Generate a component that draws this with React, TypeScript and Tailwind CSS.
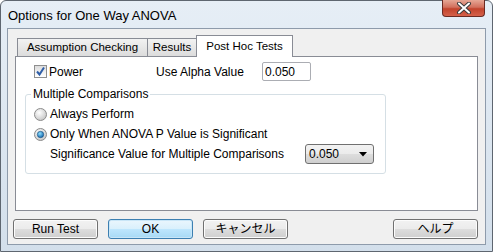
import { ReactNode } from "react";

const font = { fontFamily: '"Liberation Sans", "Noto Sans CJK JP", sans-serif' };

const Button = ({ children, primary }: { children: ReactNode; primary?: boolean }) => (
  <div
    className={
      "w-[85px] h-[20px] flex items-center justify-center rounded-[3px] border text-[12px] text-black " +
      (primary
        ? "border-[#3c7fb1] bg-[linear-gradient(#eaf6fd_0%,#d9f0fc_50%,#bee6fd_51%,#a7d9f5_100%)] shadow-[inset_0_0_0_1px_#c9e6f7]"
        : "border-[#707070] bg-[linear-gradient(#f2f2f2_0%,#ebebeb_50%,#dddddd_51%,#cfcfcf_100%)] shadow-[inset_0_0_0_1px_#fcfcfc]")
    }
  >
    {children}
  </div>
);

const Tab = ({ label, width, active }: { label: string; width: string; active?: boolean }) =>
  active ? (
    <div className={"relative z-10 h-[22px] -mb-px -ml-px flex items-center justify-center border border-b-0 border-[#898c95] bg-white text-[11.5px] " + width}>
      {label}
    </div>
  ) : (
    <div className={"h-[18px] -ml-px first:ml-0 flex items-center justify-center border border-b-0 border-[#898c95] bg-[linear-gradient(#f2f2f2,#dcdcdc)] text-[11.5px] " + width}>
      {label}
    </div>
  );

const Radio = ({ checked }: { checked?: boolean }) => (
  <svg width="13" height="13" viewBox="0 0 13 13">
    <defs>
      <radialGradient id="rg" cx="40%" cy="35%" r="70%">
        <stop offset="0%" stopColor="#ffffff" />
        <stop offset="100%" stopColor="#c4c4c4" />
      </radialGradient>
      <radialGradient id="rb" cx="40%" cy="35%" r="70%">
        <stop offset="0%" stopColor="#8fe0ff" />
        <stop offset="100%" stopColor="#0c5fa8" />
      </radialGradient>
    </defs>
    <circle cx="6.5" cy="6.5" r="6" fill="url(#rg)" stroke="#8c8c8c" />
    {checked && <circle cx="6.5" cy="6.5" r="3.2" fill="url(#rb)" stroke="#1b4f7a" strokeWidth="0.6" />}
  </svg>
);

export default function App() {
  return (
    <div style={font} className="w-[493px] h-[252px] text-black">
      <div className="w-full h-full flex flex-col border border-[#5e6670] rounded-t-[6px] bg-[linear-gradient(#e6eef6,#d3dfeb)]">
        <div className="h-[27px] flex justify-between pl-[7px] pr-[7px]">
          <div className="pt-[5px] text-[13px] text-black">Options for One Way ANOVA</div>
          <div className="w-[43px] h-[17px] -mt-px rounded-b-[4px] border border-t-0 border-[#6b2a22] bg-[linear-gradient(#e6a795_0%,#d2705d_45%,#c2432c_55%,#d5614a_100%)] flex items-center justify-center">
            <svg width="16" height="12" viewBox="0 0 16 12">
              <path d="M3 1.5 L13 10.5 M13 1.5 L3 10.5" stroke="#3b3b3b" strokeWidth="4" strokeLinecap="round" />
              <path d="M3 1.5 L13 10.5 M13 1.5 L3 10.5" stroke="#ffffff" strokeWidth="2" strokeLinecap="round" />
            </svg>
          </div>
        </div>
        <div className="flex-1 mx-[6px] mb-[6px] border border-[#8e9bab] bg-[#f0f0f0] flex flex-col pl-[7px] pr-[7px]">
          <div className="flex items-end h-[27px] pl-[2px]">
            <Tab label="Assumption Checking" width="w-[131px]" />
            <Tab label="Results" width="w-[50px]" />
            <Tab label="Post Hoc Tests" width="w-[97px]" active />
          </div>
          <div className="h-[155px] border border-[#898c95] bg-white pl-[18px] pt-[5px] text-[12px]">
            <div className="flex items-center h-[19px]">
              <div className="w-[13px] h-[13px] border border-[#8f8f8f] bg-[linear-gradient(#dcdcdc,#ffffff)] flex items-center justify-center">
                <svg width="11" height="11" viewBox="0 0 11 11">
                  <path d="M2 5.5 L4.5 8.5 L9 1.5" fill="none" stroke="#2f5ea8" strokeWidth="2" />
                </svg>
              </div>
              <span className="ml-[2px] w-[107px]">Power</span>
              <span className="w-[106px]">Use Alpha Value</span>
              <div className="w-[49px] h-[19px] border border-[#abadb3] rounded-[2px] px-[2px] flex items-center">0.050</div>
            </div>
            <div className="relative mt-[13px] -ml-[9px] w-[361px] h-[80px] border border-[#d5dfe5] rounded-[3px] pl-[8px] pt-[9px]">
              <span className="absolute -top-[8px] left-[5px] bg-white px-[2px] leading-[14px]">Multiple Comparisons</span>
              <div className="flex items-center gap-[3px] h-[20px]">
                <Radio />
                <span>Always Perform</span>
              </div>
              <div className="flex items-center gap-[3px] h-[20px]">
                <Radio checked />
                <span>Only When ANOVA P Value is Significant</span>
              </div>
              <div className="flex items-center h-[20px] pl-[16px]">
                <span className="w-[255px]">Significance Value for Multiple Comparisons</span>
                <div className="w-[69px] h-[20px] rounded-[3px] border border-[#707070] bg-[linear-gradient(#f2f2f2_0%,#ebebeb_50%,#dddddd_51%,#cfcfcf_100%)] flex items-center justify-between pl-[3px] pr-[6px]">
                  <span>0.050</span>
                  <svg width="8" height="5" viewBox="0 0 8 5">
                    <path d="M0 0 H8 L4 4.5 Z" fill="#000" />
                  </svg>
                </div>
              </div>
            </div>
          </div>
          <div className="flex items-center mt-[8px] -ml-[2px]">
            <div className="flex gap-[10px]">
              <Button>Run Test</Button>
              <Button primary>OK</Button>
              <Button>キャンセル</Button>
            </div>
            <div className="ml-auto">
              <Button>ヘルプ</Button>
            </div>
          </div>
        </div>
      </div>
    </div>
  );
}
